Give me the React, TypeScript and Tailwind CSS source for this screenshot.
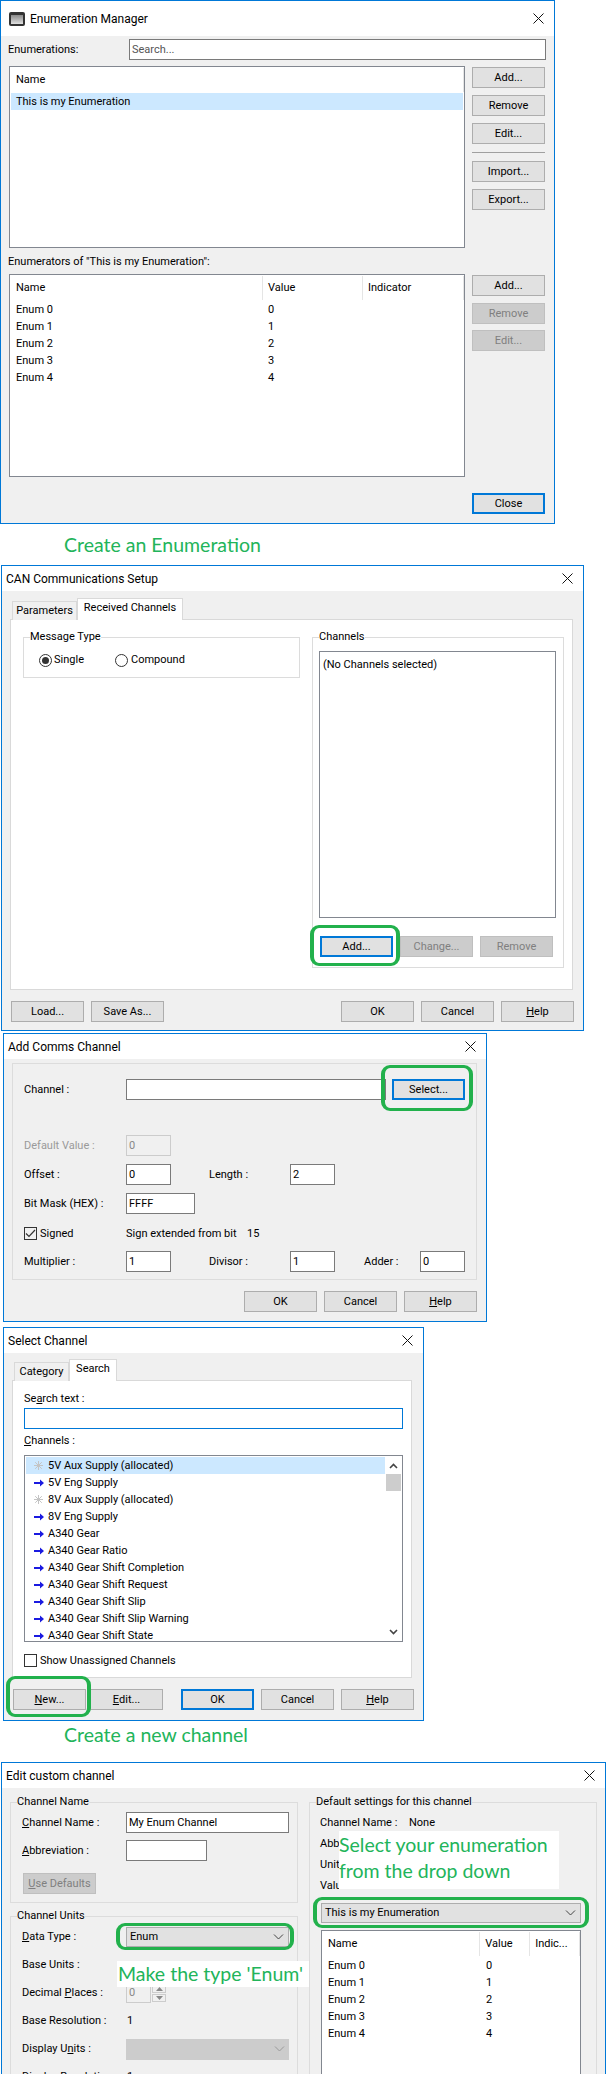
import React from "react";

const Chevron = ({ c = "#444" }: { c?: string }) => (
  <svg width="11" height="6" viewBox="0 0 11 6" fill="none" stroke={c} strokeWidth="1"><path d="M1 0.5 L5.5 5 L10 0.5" /></svg>
);
const CloseX = () => (
  <svg width="11" height="11" viewBox="0 0 11 11" stroke="#111" strokeWidth="1"><path d="M0.5 0.5 L10.5 10.5 M10.5 0.5 L0.5 10.5" /></svg>
);
const Arrow = () => (
  <svg width="10" height="8" viewBox="0 0 10 8" fill="#1a1ae0"><path d="M0 3 H6 V0.5 L10 4 L6 7.5 V5 H0 Z" /></svg>
);
const Star = () => (
  <svg width="9" height="9" viewBox="0 0 9 9" stroke="#c4c4c4" strokeWidth="1"><path d="M4.5 0 V9 M0 4.5 H9 M1.2 1.2 L7.8 7.8 M7.8 1.2 L1.2 7.8" /></svg>
);

function Btn({ children, w = "w-[73px]", focus, disabled }: { children: React.ReactNode; w?: string; focus?: boolean; disabled?: boolean }) {
  const tone = focus
    ? "border-2 border-[#0078d7] bg-[#e1e1e1] text-black"
    : disabled
    ? "border border-[#bfbfbf] bg-[#cccccc] text-[#7f7f7f]"
    : "border border-[#adadad] bg-[#e1e1e1] text-black";
  return <div className={`${w} h-[21px] shrink-0 flex items-center justify-center ${tone}`}>{children}</div>;
}

function Win({ cls, title, icon, children }: { cls: string; title: string; icon?: boolean; children: React.ReactNode }) {
  return (
    <div className={`${cls} shrink-0 border border-[#0078d7] bg-[#f0f0f0] flex flex-col overflow-hidden`}>
      <div className={`bg-white flex items-center justify-between shrink-0 ${icon ? "h-[35px] pl-[8px] pr-[10px]" : "h-[25px] pl-[4px] pr-[10px]"}`}>
        <div className="flex items-center gap-[5px]">
          {icon && (
            <div className="w-[16px] h-[14px] rounded-[2px] bg-[#333] flex items-end justify-center pb-[2px]">
              <div className="w-[12px] h-[9px] bg-gradient-to-b from-[#8a8a8a] to-[#e0e0e0]" />
            </div>
          )}
          <span className="text-[12px]">{title}</span>
        </div>
        <CloseX />
      </div>
      {children}
    </div>
  );
}

const Caption = ({ children, cls }: { children: React.ReactNode; cls: string }) => (
  <div className={`${cls} shrink-0 pl-[64px] font-['Lato',sans-serif] text-[19.5px] leading-[28px] text-[#22b45a]`}>{children}</div>
);

const Green = ({ cls }: { cls: string }) => (
  <div className={`absolute ${cls} border-x-[4px] border-y-[3px] border-[#22b14c] rounded-[9px] pointer-events-none z-10`} />
);

const Group = ({ legend, cls, children }: { legend: string; cls: string; children?: React.ReactNode }) => (
  <div className={`${cls} relative shrink-0 border border-[#dcdcdc]`}>
    <span className="absolute left-[6px] -top-[9px] leading-[16px] bg-inherit whitespace-nowrap">{legend}</span>
    {children}
  </div>
);

const Input = ({ w, v, cls = "", h = "h-[21px]" }: { w: string; v?: string; cls?: string; h?: string }) => (
  <div className={`${w} ${h} shrink-0 bg-white border border-[#7a7a7a] pl-[2px] flex items-center ${cls}`}>{v}</div>
);

const Lbl = ({ w, children, cls = "" }: { w: string; children: React.ReactNode; cls?: string }) => (
  <div className={`${w} shrink-0 whitespace-nowrap ${cls}`}>{children}</div>
);

const Select = ({ w, v, cls = "" }: { w: string; v: string; cls?: string }) => (
  <div className={`${w} h-[20px] shrink-0 bg-[#e1e1e1] border border-[#adadad] pl-[3px] pr-[4px] flex items-center justify-between ${cls}`}>
    <span>{v}</span>
    <Chevron />
  </div>
);

const U = ({ children }: { children: React.ReactNode }) => <span className="underline underline-offset-1">{children}</span>;

const enums = ["0", "1", "2", "3", "4"];

function Tabs({ a, b, aw, bw }: { a: string; b: string; aw: string; bw: string }) {
  return (
    <div className="flex items-end h-[21px] ml-[10px] shrink-0 relative z-[1] -mb-px">
      <div className={`${aw} h-[19px] border border-b-0 border-[#d9d9d9] bg-[#f0f0f0] flex items-center justify-center`}>{a}</div>
      <div className={`${bw} h-[22px] border border-b-0 border-[#d9d9d9] bg-white flex items-center justify-center pb-[3px]`}>{b}</div>
    </div>
  );
}

function EnumList({ h, c1, c2, c3, third, cls = "" }: { h: string; c1: string; c2: string; c3: string; third: string; cls?: string }) {
  return (
    <div className={`${h} bg-white border border-[#828790] pt-[1px] pl-[1px] overflow-hidden ${cls}`}>
      <div className="flex h-[24px] items-center">
        <div className={`${c1} h-full pl-[5px] border-r border-[#e5e5e5] flex items-center`}>Name</div>
        <div className={`${c2} h-full pl-[5px] border-r border-[#e5e5e5] flex items-center`}>Value</div>
        <div className={`${c3} h-full pl-[5px] border-r border-[#e5e5e5] flex items-center`}>{third}</div>
      </div>
      <div className="pt-[1px]">
        {enums.map((n) => (
          <div key={n} className="flex h-[17px] items-center">
            <div className={`${c1} pl-[5px]`}>Enum {n}</div>
            <div className={`${c2} pl-[5px]`}>{n}</div>
          </div>
        ))}
      </div>
    </div>
  );
}

const channels: [string, boolean][] = [
  ["5V Aux Supply (allocated)", true],
  ["5V Eng Supply", false],
  ["8V Aux Supply (allocated)", true],
  ["8V Eng Supply", false],
  ["A340 Gear", false],
  ["A340 Gear Ratio", false],
  ["A340 Gear Shift Completion", false],
  ["A340 Gear Shift Request", false],
  ["A340 Gear Shift Slip", false],
  ["A340 Gear Shift Slip Warning", false],
  ["A340 Gear Shift State", false],
];

export default function App() {
  return (
    <div className="w-[610px] h-[2074px] overflow-hidden bg-white flex flex-col font-['Roboto',sans-serif] text-[11px] leading-[16px] text-black">
      {/* Enumeration Manager */}
      <Win cls="w-[555px] h-[524px]" title="Enumeration Manager" icon>
        <div className="flex items-center h-[21px] mt-[3px] pl-[7px]">
          <Lbl w="w-[121px]">Enumerations:</Lbl>
          <Input w="w-[417px]" v="Search..." cls="text-[#555]" />
        </div>
        <div className="flex mt-[6px] pl-[8px]">
          <div className="w-[456px] h-[182px] bg-white border border-[#828790] pt-[1px] pl-[1px]">
            <div className="h-[24px] w-[453px] pl-[5px] border-r border-[#e5e5e5] flex items-center">Name</div>
            <div className="h-[17px] mt-[1px] w-[452px] pl-[5px] bg-[#cce8ff] flex items-center">This is my Enumeration</div>
          </div>
          <div className="ml-[7px] mt-[1px] flex flex-col gap-[7px]">
            <Btn>Add...</Btn>
            <Btn>Remove</Btn>
            <Btn>Edit...</Btn>
            <div className="h-px bg-[#a0a0a0] my-px" />
            <Btn>Import...</Btn>
            <Btn>Export...</Btn>
          </div>
        </div>
        <div className="h-[16px] mt-[6px] pl-[7px]">Enumerators of "This is my Enumeration":</div>
        <div className="flex mt-[4px] pl-[8px]">
          <EnumList h="h-[203px] w-[456px]" c1="w-[252px]" c2="w-[100px]" c3="w-[101px]" third="Indicator" />
          <div className="ml-[7px] mt-[1px] flex flex-col">
            <Btn>Add...</Btn>
            <div className="mt-[7px]"><Btn disabled>Remove</Btn></div>
            <div className="mt-[6px]"><Btn disabled>Edit...</Btn></div>
          </div>
        </div>
        <div className="flex mt-[16px] pl-[471px]">
          <Btn focus>Close</Btn>
        </div>
      </Win>
      <Caption cls="h-[41px] pt-[7px]">Create an Enumeration</Caption>

      {/* CAN Communications Setup */}
      <Win cls="w-[583px] h-[466px] ml-[1px]" title="CAN Communications Setup">
        <div className="mt-[8px]" />
        <Tabs a="Parameters" b="Received Channels" aw="w-[65px]" bw="w-[106px]" />
        <div className="ml-[8px] w-[563px] h-[371px] shrink-0 bg-white border border-[#d9d9d9] flex pt-[17px] pl-[12px]">
          <Group legend="Message Type" cls="w-[277px] h-[41px] bg-white">
            <div className="flex items-center h-[16px] mt-[14px] pl-[15px]">
              <div className="w-[13px] h-[13px] rounded-full border border-[#333] flex items-center justify-center shrink-0">
                <div className="w-[7px] h-[7px] rounded-full bg-[#333]" />
              </div>
              <span className="ml-[2px] w-[61px]">Single</span>
              <div className="w-[13px] h-[13px] rounded-full border border-[#333] shrink-0" />
              <span className="ml-[3px]">Compound</span>
            </div>
          </Group>
          <Group legend="Channels" cls="w-[252px] h-[331px] ml-[12px] bg-white">
            <div className="ml-[6px] mt-[13px] w-[237px] h-[267px] border border-[#828790] pl-[3px] pt-[5px]">(No Channels selected)</div>
            <div className="flex gap-[7px] mt-[18px] ml-[7px]">
              <div className="relative">
                <Btn focus>Add...</Btn>
                <Green cls="-left-[10px] -right-[7px] -top-[11px] -bottom-[9px]" />
              </div>
              <Btn disabled>Change...</Btn>
              <Btn disabled>Remove</Btn>
            </div>
          </Group>
        </div>
        <div className="flex mt-[11px] pl-[9px] pr-[9px] justify-between">
          <div className="flex gap-[7px]">
            <Btn>Load...</Btn>
            <Btn>Save As...</Btn>
          </div>
          <div className="flex gap-[7px]">
            <Btn>OK</Btn>
            <Btn>Cancel</Btn>
            <Btn><U>H</U>elp</Btn>
          </div>
        </div>
      </Win>

      {/* Add Comms Channel */}
      <Win cls="w-[484px] h-[289px] ml-[3px] mt-[2px]" title="Add Comms Channel">
        <div className="ml-[8px] mt-[4px] w-[465px] h-[217px] shrink-0 border border-[#dcdcdc] pl-[11px] pt-[15px]">
          <div className="flex items-center">
            <Lbl w="w-[102px]">Channel :</Lbl>
            <Input w="w-[260px]" />
            <div className="relative ml-[6px]">
              <Btn focus>Select...</Btn>
              <Green cls="-left-[11px] -right-[8px] -top-[14px] -bottom-[11px]" />
            </div>
          </div>
          <div className="flex items-center mt-[35px]">
            <Lbl w="w-[102px]" cls="text-[#9a9a9a]">Default Value :</Lbl>
            <Input w="w-[45px]" v="0" cls="!bg-[#f0f0f0] !border-[#cccccc] text-[#888]" />
          </div>
          <div className="flex items-center mt-[8px]">
            <Lbl w="w-[102px]">Offset :</Lbl>
            <Input w="w-[45px]" v="0" />
            <Lbl w="w-[81px]" cls="ml-[38px]">Length :</Lbl>
            <Input w="w-[45px]" v="2" />
          </div>
          <div className="flex items-center mt-[8px]">
            <Lbl w="w-[102px]">Bit Mask (HEX) :</Lbl>
            <Input w="w-[69px]" v="FFFF" />
          </div>
          <div className="flex items-center mt-[13px] h-[13px]">
            <div className="w-[13px] h-[13px] border border-[#333] bg-[#f0f0f0] shrink-0 flex items-center justify-center">
              <svg width="11" height="9" viewBox="0 0 11 9" fill="none" stroke="#333" strokeWidth="1.2"><path d="M1 4.5 L4 7.5 L10 1" /></svg>
            </div>
            <span className="ml-[3px] w-[86px]">Signed</span>
            <span className="w-[121px] whitespace-nowrap">Sign extended from bit</span>
            <span>15</span>
          </div>
          <div className="flex items-center mt-[11px]">
            <Lbl w="w-[102px]">Multiplier :</Lbl>
            <Input w="w-[45px]" v="1" />
            <Lbl w="w-[81px]" cls="ml-[38px]">Divisor :</Lbl>
            <Input w="w-[45px]" v="1" />
            <Lbl w="w-[56px]" cls="ml-[29px]">Adder :</Lbl>
            <Input w="w-[45px]" v="0" />
          </div>
        </div>
        <div className="flex mt-[11px] pr-[9px] gap-[7px] justify-end">
          <Btn>OK</Btn>
          <Btn>Cancel</Btn>
          <Btn><U>H</U>elp</Btn>
        </div>
      </Win>

      {/* Select Channel */}
      <Win cls="w-[421px] h-[394px] ml-[3px] mt-[5px]" title="Select Channel">
        <div className="mt-[7px]" />
        <Tabs a="Category" b="Search" aw="w-[55px]" bw="w-[48px]" />
        <div className="ml-[8px] w-[400px] h-[298px] shrink-0 bg-white border border-[#d9d9d9] pl-[11px] pt-[10px]">
          <div>Se<U>a</U>rch text :</div>
          <div className="w-[379px] h-[21px] mt-px border border-[#0078d7] bg-white" />
          <div className="mt-[4px]"><U>C</U>hannels :</div>
          <div className="w-[379px] h-[187px] mt-[6px] border border-[#828790] flex overflow-hidden pl-px pt-px">
            <div className="w-[359px] shrink-0">
              {channels.map(([n, s], i) => (
                <div key={n} className={`h-[17px] flex items-center pl-[8px] ${i === 0 ? "bg-[#cce8ff]" : ""}`}>
                  <div className="w-[14px] shrink-0 flex items-center">{s ? <Star /> : <Arrow />}</div>
                  <span>{n}</span>
                </div>
              ))}
            </div>
            <div className="w-[15px] ml-px h-full flex flex-col items-center justify-between pt-[6px] pb-[6px] relative">
              <svg width="9" height="6" viewBox="0 0 9 6" fill="none" stroke="#444" strokeWidth="1.6"><path d="M1 5 L4.5 1.5 L8 5" /></svg>
              <div className="absolute top-[17px] left-0 w-[15px] h-[17px] bg-[#cdcdcd]" />
              <svg width="9" height="6" viewBox="0 0 9 6" fill="none" stroke="#444" strokeWidth="1.6"><path d="M1 1 L4.5 4.5 L8 1" /></svg>
            </div>
          </div>
          <div className="flex items-center mt-[12px] h-[13px]">
            <div className="w-[13px] h-[13px] border border-[#333] shrink-0" />
            <span className="ml-[3px]">Show Unassigned Channels</span>
          </div>
        </div>
        <div className="flex mt-[11px] pl-[9px] pr-[9px] justify-between">
          <div className="flex gap-[4px]">
            <div className="relative">
              <Btn><U>N</U>ew...</Btn>
              <Green cls="-left-[7px] -right-[5px] -top-[13px] -bottom-[7px]" />
            </div>
            <Btn><U>E</U>dit...</Btn>
          </div>
          <div className="flex gap-[7px]">
            <Btn focus>OK</Btn>
            <Btn>Cancel</Btn>
            <Btn><U>H</U>elp</Btn>
          </div>
        </div>
      </Win>
      <Caption cls="h-[41px]">Create a new channel</Caption>

      {/* Edit custom channel */}
      <Win cls="w-[605px] h-[400px] ml-[1px]" title="Edit custom channel">
        <div className="flex pl-[8px] mt-[14px] gap-[11px]">
          <div className="w-[288px] shrink-0">
            <Group legend="Channel Name" cls="w-[288px] h-[101px] bg-[#f0f0f0]">
              <div className="pl-[11px] pt-[9px]">
                <div className="flex items-center h-[21px]">
                  <Lbl w="w-[104px]"><U>C</U>hannel Name :</Lbl>
                  <Input w="w-[163px]" v="My Enum Channel" />
                </div>
                <div className="flex items-center h-[21px] mt-[7px]">
                  <Lbl w="w-[104px]"><U>A</U>bbreviation :</Lbl>
                  <Input w="w-[81px]" />
                </div>
                <div className="mt-[12px] ml-[1px]"><Btn disabled><U>U</U>se Defaults</Btn></div>
              </div>
            </Group>
            <Group legend="Channel Units" cls="w-[288px] h-[220px] mt-[13px] bg-[#f0f0f0]">
              <div className="pl-[11px] pt-[10px] flex flex-col gap-[8px]">
                <div className="flex items-center h-[20px]">
                  <Lbl w="w-[104px]"><U>D</U>ata Type :</Lbl>
                  <div className="relative">
                    <Select w="w-[163px]" v="Enum" />
                    <Green cls="-left-[10px] -right-[5px] -top-[4px] -bottom-[3px]" />
                  </div>
                </div>
                <div className="flex items-center h-[20px] relative">
                  <Lbl w="w-[104px]">Base Units :</Lbl>
                  <div className="absolute left-[95px] top-[6px] w-[192px] h-[26px] bg-white font-['Lato',sans-serif] text-[19.5px] leading-[26px] text-[#22b45a] whitespace-nowrap pl-px z-10">Make the type 'Enum'</div>
                </div>
                <div className="flex items-center h-[20px]">
                  <Lbl w="w-[104px]">Decimal <U>P</U>laces :</Lbl>
                  <Input w="w-[25px]" h="h-[19px]" v="0" cls="!bg-[#f0f0f0] !border-[#cccccc] text-[#888]" />
                  <div className="ml-px w-[14px] flex flex-col gap-px">
                    <div className="h-[8px] border border-[#cccccc] flex items-center justify-center">
                      <svg width="7" height="4" viewBox="0 0 7 4" fill="#888"><path d="M0 4 L3.5 0 L7 4 Z" /></svg>
                    </div>
                    <div className="h-[8px] border border-[#cccccc] flex items-center justify-center">
                      <svg width="7" height="4" viewBox="0 0 7 4" fill="#888"><path d="M0 0 L3.5 4 L7 0 Z" /></svg>
                    </div>
                  </div>
                </div>
                <div className="flex items-center h-[20px]">
                  <Lbl w="w-[104px]">Base Resolution :</Lbl>
                  <span className="ml-px">1</span>
                </div>
                <div className="flex items-center h-[20px]">
                  <Lbl w="w-[104px]">Display U<U>n</U>its :</Lbl>
                  <div className="w-[163px] h-[21px] bg-[#cccccc] pr-[4px] flex items-center justify-end"><Chevron c="#999" /></div>
                </div>
                <div className="flex items-center h-[20px]">
                  <Lbl w="w-[104px]">Display Resolution :</Lbl>
                  <span className="ml-px">1</span>
                </div>
              </div>
            </Group>
          </div>
          <Group legend="Default settings for this channel" cls="w-[288px] h-[330px] bg-[#f0f0f0]">
            <div className="pl-[10px] pt-[12px]">
              <div className="h-[21px] flex">
                <span className="w-[89px]">Channel Name :</span>
                <span>None</span>
              </div>
              <div className="h-[21px] relative">
                Abb
                <div className="absolute left-[19px] -top-[5px] w-[220px] h-[58px] bg-white font-['Lato',sans-serif] text-[19.5px] leading-[26px] text-[#22b45a] whitespace-nowrap pt-[1px] z-10">
                  <div>Select your enumeration</div>
                  <div>from the drop down</div>
                </div>
              </div>
              <div className="h-[21px]">Unit</div>
              <div className="h-[16px]">Values :</div>
              <div className="relative ml-px mt-[9px] w-[260px]">
                <Select w="w-[260px]" v="This is my Enumeration" />
                <Green cls="-left-[8px] -right-[8px] -top-[6px] -bottom-[5px]" />
              </div>
              <EnumList h="h-[200px] w-[260px]" c1="w-[158px]" c2="w-[50px]" c3="w-[50px]" third="Indic..." cls="ml-px mt-[7px]" />
            </div>
          </Group>
        </div>
      </Win>
    </div>
  );
}
